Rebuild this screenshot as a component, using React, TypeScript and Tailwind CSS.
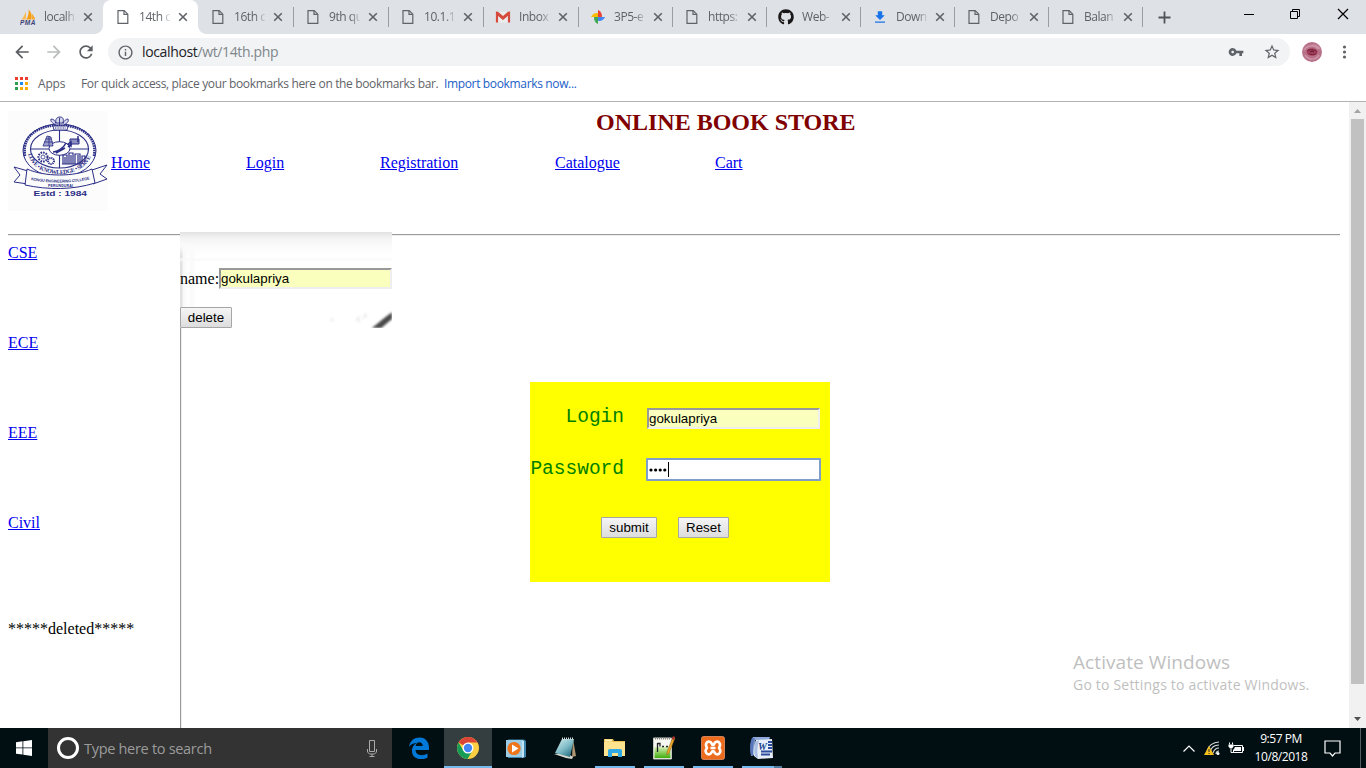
import React from "react";
import { FaGithub } from "react-icons/fa";
import { MdVpnKey, MdStarBorder, MdInfoOutline, MdArrowBack, MdArrowForward, MdRefresh } from "react-icons/md";

const FileIcon = () => (
  <svg width="12" height="16" viewBox="0 0 12 16" fill="none" stroke="#5f6368" strokeWidth="1.2">
    <path d="M1 1.6h6.2L10.8 5.2V14.4H1z" />
    <path d="M7 1.8V5.4h3.6" />
  </svg>
);

const PmaIcon = () => (
  <svg width="16" height="16" viewBox="0 0 16 16">
    <path d="M1.500 10.500C4 8 5 5 5.400 2.500c.8 2.500.8 5 .2 8z" fill="#fbb84c" />
    <path d="M6.200 10.500C8.500 7 9 4 8.600.5c3 3 3.600 6 2.700 10z" fill="#f89c0e" />
    <path d="M11.800 10.500c.5-2 .4-4-.2-6 1.800 1.500 3 3.500 3.600 6z" fill="#f8a52b" />
    <text x="0" y="15.600" fontSize="6.500" fontWeight="bold" fontStyle="italic" fontFamily="Liberation Sans, sans-serif" fill="#3c3f78" textLength="15.500">PMA</text>
  </svg>
);

const GmailIcon = () => (
  <svg width="16" height="16" viewBox="0 0 16 16">
    <path d="M2 3h12v10.500H2z" fill="#ececec" />
    <path d="M2 13.500V4.500l6 5 6-5v9" fill="none" stroke="#d54b3d" strokeWidth="2.200" />
    <path d="M1 2.700h2L8 7l5-4.300h2v2.500L8 10.400 1 5.200z" fill="#d54b3d" />
  </svg>
);

const PhotosIcon = () => (
  <svg width="16" height="16" viewBox="0 0 16 16">
    <path d="M8 1v7h3.800C12.500 5 10.500 1.700 8 1z" fill="#ea4335" />
    <path d="M15 8H8v3.800C11 12.500 14.200 10.500 15 8z" fill="#4285f4" />
    <path d="M8 15V8H4.200C3.500 11 5.500 14.200 8 15z" fill="#43a853" />
    <path d="M1 8h7V4.200C5 3.500 1.800 5.500 1 8z" fill="#fbbc05" />
  </svg>
);

const DownloadIcon = () => (
  <svg width="16" height="16" viewBox="0 0 16 16" fill="#1a73e8">
    <path d="M5.800 2.300h4.400v3.900h2.600L8 11 3.200 6.200h2.600zM3 12.500h10v1.300H3z" />
  </svg>
);

const CloseIcon = () => (
  <svg width="10" height="10" viewBox="0 0 10 10" stroke="#5f6368" strokeWidth="1.600">
    <path d="M1.200 1.200l7.600 7.600M8.800 1.200L1.200 8.800" />
  </svg>
);

type TabData = { title: string; icon: React.ReactNode; cls: string; active?: boolean; sep?: boolean };
const tabs: TabData[] = [
  { title: "localh", icon: <PmaIcon />, cls: "w-[95px]" },
  { title: "14th c", icon: <FileIcon />, cls: "w-[95px]", active: true },
  { title: "16th c", icon: <FileIcon />, cls: "w-[95px]", sep: true },
  { title: "9th qu", icon: <FileIcon />, cls: "w-[95px]", sep: true },
  { title: "10.1.1", icon: <FileIcon />, cls: "w-[95px]", sep: true },
  { title: "Inbox", icon: <GmailIcon />, cls: "w-[95px]", sep: true },
  { title: "3P5-e", icon: <PhotosIcon />, cls: "w-[94px]", sep: true },
  { title: "https:", icon: <FileIcon />, cls: "w-[94px]", sep: true },
  { title: "Web-", icon: <FaGithub size={16} color="#191717" />, cls: "w-[94px]", sep: true },
  { title: "Down", icon: <DownloadIcon />, cls: "w-[94px]", sep: true },
  { title: "Depo", icon: <FileIcon />, cls: "w-[94px]", sep: true },
  { title: "Balan", icon: <FileIcon />, cls: "w-[94px]", sep: true },
];

const Tab = ({ t }: { t: TabData }) => (
  <div className={`relative flex h-full shrink-0 items-center ${t.cls} ${t.active ? "rounded-t-lg bg-white" : ""}`}>
    {t.active && (
      <>
        <span className="absolute -left-2 bottom-0 size-2 bg-[radial-gradient(circle_at_0_0,#dee1e6_7.500px,#fff_8px)]" />
        <span className="absolute -right-2 bottom-0 size-2 bg-[radial-gradient(circle_at_100%_0,#dee1e6_7.500px,#fff_8px)]" />
      </>
    )}
    <span className="ml-3 flex w-4 justify-center">{t.icon}</span>
    <span className="ml-2 w-[31px] whitespace-nowrap text-[12px] leading-4 tracking-[-0.45px] text-[#5f6368] [mask-image:linear-gradient(to_right,#000_68%,transparent_105%)]">
      {t.title}
    </span>
    <span className="ml-2"><CloseIcon /></span>
    {t.sep && <span className="absolute -right-px top-[7px] h-5 w-px bg-[#9a9da1]" />}
  </div>
);

const TabStrip = () => (
  <div className="flex h-[34px] bg-[#dee1e6] pl-2">
    {tabs.map((t) => <Tab key={t.title} t={t} />)}
    <svg className="ml-4 mt-[11px]" width="13" height="13" viewBox="0 0 13 13" stroke="#505459" strokeWidth="1.800"><path d="M6.500.5v12M.5 6.500h12" /></svg>
    <div className="ml-auto flex items-start pr-[17px] pt-[8px]">
      <svg className="mr-[35px]" width="12" height="12" viewBox="0 0 12 12" stroke="#000"><path d="M1 6.500h10" /></svg>
      <svg className="mr-[36px]" width="11" height="12" viewBox="0 0 11 12" fill="none" stroke="#000"><path d="M.5 3.500h7v7h-7zM2.500 3.500v-2h7v7h-2" /></svg>
      <svg width="12" height="12" viewBox="0 0 12 12" stroke="#000" strokeWidth="1.200"><path d="M1 1l10 10M11 1L1 11" /></svg>
    </div>
  </div>
);

const Toolbar = () => (
  <div className="flex h-[36px] items-center bg-white">
    <MdArrowBack className="ml-[12px]" size={20} color="#5a5d61" />
    <MdArrowForward className="ml-[12px]" size={20} color="#babcbe" />
    <MdRefresh className="ml-[12px]" size={20} color="#5a5d61" />
    <div className="ml-[12px] flex h-7 w-[1182px] items-center rounded-full bg-[#f1f3f4] pl-[9px]">
      <MdInfoOutline size={17} color="#5f6368" />
      <span className="ml-2 text-[14px] leading-5 tracking-[-0.36px] text-[#80868b]"><span className="text-[#202124]">localhost</span>/wt/14th.php</span>
      <MdVpnKey className="ml-auto" size={16} color="#5f6368" />
      <MdStarBorder className="ml-[19px] mr-[9px]" size={18} color="#5f6368" />
    </div>
    <svg className="ml-3" width="20" height="20" viewBox="0 0 20 20">
      <circle cx="10" cy="10" r="10" fill="#b97189" />
      <path d="M2 8c4-6 12-6 16-1M3 13c4 6 11 5 14 0M4 6c4-3 9-3 12 1" stroke="#cc93a6" strokeWidth="1.500" fill="none" />
      <ellipse cx="10" cy="10" rx="5.500" ry="3.800" fill="#a5405c" />
      <path d="M5 9c2-2 7-2 10 1M7 11.500c2 1.500 5 1.500 7 0" stroke="#6f1d38" fill="none" />
      <path d="M8 10c1-1 3-1 4 0" stroke="#5b1730" fill="none" />
    </svg>
    <svg className="ml-[20px]" width="5" height="14" viewBox="0 0 5 14" fill="#5f6368"><circle cx="2.500" cy="2" r="1.600" /><circle cx="2.500" cy="7" r="1.600" /><circle cx="2.500" cy="12" r="1.600" /></svg>
  </div>
);

const Bookmarks = () => (
  <div className="flex h-[32px] items-center border-b border-[#b0b2b4] pb-[4px] text-[12px] leading-4 text-[#5f6368]">
    <svg className="ml-[15px]" width="13" height="13" viewBox="0 0 13 13">
      <path d="M0 0h3v3H0zM5 0h3v3H5zM10 0h3v3h-3z" fill="#f03c2e" />
      <path d="M0 5h3v3H0z" fill="#2d9d50" /><path d="M5 5h3v3H5z" fill="#1e88f5" /><path d="M10 5h3v3h-3z" fill="#f9ac08" />
      <path d="M0 10h3v3H0z" fill="#2d9d50" /><path d="M5 10h3v3H5zM10 10h3v3h-3z" fill="#f9ac08" />
    </svg>
    <span className="ml-[10px] w-[43px] pt-px tracking-[-0.2px]">Apps</span>
    <span className="w-[363px] whitespace-nowrap pt-px tracking-[-0.35px]">For quick access, place your bookmarks here on the bookmarks bar.</span>
    <span className="whitespace-nowrap pt-px tracking-[-0.35px] text-[#1a60c8]">Import bookmarks now...</span>
  </div>
);

const Crest = () => (
  <svg width="100" height="100" viewBox="0 0 100 100" fill="none" stroke="#2b2e86">
    <rect width="100" height="100" fill="#fcfcfc" stroke="none" />
    <ellipse cx="51.500" cy="39.500" rx="36.500" ry="26.500" strokeWidth="1" />
    <path d="M17 45C13 20 38 14 51.500 14S90 20 86 45" strokeWidth="2.600" strokeDasharray="1.600 .7" />
    <ellipse cx="51.500" cy="38" rx="29" ry="19" strokeWidth="1.100" />
    <path d="M51.500 19V57M22.500 38h58" strokeWidth="1.100" />
    <ellipse cx="51.500" cy="37.500" rx="10.500" ry="6.800" fill="#fcfcfc" />
    <path d="M45 41c4 0 10-3 13-9M48 42l9-5M60 36l8-7" strokeWidth="1.500" />
    <path d="M62 28h9v5h-9z" fill="#8d8fc1" /><path d="M60 33l3-2v4zM70 25v6" strokeWidth="1.500" />
    <path d="M35 35l4-10 4 1 2 9zM36 31h9M38 28h5M41 25v10" strokeWidth=".8" fill="#9ea0ca" />
    <circle cx="35" cy="46" r="4.500" strokeWidth="2" strokeDasharray="1.600 1" /><circle cx="35" cy="46" r="2" strokeWidth=".8" />
    <circle cx="43" cy="50" r="3" strokeWidth="2" strokeDasharray="1.200 .8" />
    <path d="M55 53v-9h4v9M61 53V42h4v11M67 53V43h5v10M57 46v7M63 44v9M70 44v9M74 53v-8h3v6M54 53h20" strokeWidth="1.200" />
    <defs><path id="motto" d="M20 43c6 27 57 27 64-1" /></defs>
    <text fontSize="6" fontWeight="bold" fill="#2b2e86" stroke="none" fontFamily="Liberation Serif, serif"><textPath href="#motto" textLength="78">LOVE • KNOWLEDGE • SERVE</textPath></text>
    <path d="M45 15h15l-1 4H46z" fill="#fcfcfc" strokeWidth=".9" /><path d="M47 17h11" strokeDasharray="1 .6" />
    <path d="M48 14c-4-2-6-4-5-6 3 0 4 2 5 4-1-4 1-6 4-6 3 0 4 2 3 6 1-2 3-4 5-4 1 3-1 4-4 6zM51.500 7v7M47 12h9" strokeWidth=".9" fill="#d6d7ea" />
    <path d="M20 60L6 56l6 8-6 7 14 2M84 59l15-5-7 9 7 5-14 5" fill="#fcfcfc" strokeWidth="1" />
    <path d="M19 58c18 8 47 8 65 0l3 14c-22 7-47 7-70 2z" fill="#fcfcfc" strokeWidth="1" />
    <defs><path id="college" d="M23 69c18 3.500 42 3.500 60-1" /></defs>
    <text fontSize="3.900" fontWeight="bold" fill="#2b2e86" stroke="none" fontFamily="Liberation Sans, sans-serif"><textPath href="#college" textLength="59">KONGU ENGINEERING COLLEGE</textPath></text>
    <text x="40" y="75.500" textLength="25" fontSize="3.600" fontWeight="bold" fill="#2b2e86" stroke="none" fontFamily="Liberation Sans, sans-serif">PERUNDURAI</text>
    <text x="25.500" y="84.800" textLength="53.500" lengthAdjust="spacingAndGlyphs" fontSize="8" fontWeight="bold" fill="#2b2e86" stroke="none" fontFamily="Liberation Sans, sans-serif">Estd : 1984</text>
  </svg>
);

const link = "text-[#0000ee] underline";
const field = "flex items-center border-2 border-[#eee] border-t-[#999] border-l-[#999] bg-[#faffbd] font-['Liberation_Sans',Arial,sans-serif] text-[13.333px] leading-[15px]";
const button = "flex h-[21px] items-center justify-center rounded-[1px] border border-[#a6a6a6] bg-linear-to-b from-[#f5f5f5] to-[#dddddd] font-['Liberation_Sans',Arial,sans-serif] text-[13.333px] leading-[15px]";
const label = "w-[94px] text-right font-['Liberation_Mono',monospace] text-[19.500px] leading-6 text-[#008000]";

const Header = () => (
  <header className="flex h-[132px]">
    <div className="ml-2 mt-[9px]"><Crest /></div>
    <div className="flex-1">
      <h1 className="pl-[488px] pt-[6px] text-[24px] font-bold leading-[28px] text-[#800000]">ONLINE BOOK STORE</h1>
      <nav className="mt-[18px] flex pl-[3px] text-[16px] leading-[18px]">
        <div className="w-[135px]"><a className={link}>Home</a></div>
        <div className="w-[134px]"><a className={link}>Login</a></div>
        <div className="w-[175px]"><a className={link}>Registration</a></div>
        <div className="w-[160px]"><a className={link}>Catalogue</a></div>
        <a className={link}>Cart</a>
      </nav>
    </div>
  </header>
);

const DeletePanel = () => (
  <div className="relative -mt-[4px] ml-[-1px] h-[96px] w-[212px] overflow-hidden bg-white">
    <div className="absolute inset-0 bg-[linear-gradient(to_bottom,#e2e2e2,#f3f3f3_6px,#fbfbfb_14px,transparent_24px,transparent_26px,#f9f9f9_27px,transparent_30px),linear-gradient(to_right,#e2e2e2_2px,#f7f7f7_3px,#fefefe_8px,#fafafa_12px,#fff_16px)]" />
    <svg className="absolute bottom-0 right-0 blur-[1px]" width="64" height="26" viewBox="0 0 64 26">
      <path d="M42 27c6-3 12-10 24-18v7c-5 3-10 8-14 11z" fill="#4a4a4a" />
      <path d="M1 18l4-3 1 5zM27 18l5-5v8zM37 10l3 4-6 4z" fill="#f0f0f0" />
    </svg>
    <div className="relative flex items-center pt-[36px] text-[16px] leading-[18px]">
      <span className="w-[39px]">name:</span>
      <div className={`${field} h-[21px] w-[173px]`}>gokulapriya</div>
    </div>
    <div className={`${button} relative mt-[18px] w-[52px]`}>delete</div>
  </div>
);

const LoginPanel = () => (
  <section className="ml-[349px] mt-[54px] h-[200px] w-[300px] bg-[#ffff00]">
    <div className="flex h-[75px] items-start pt-[26px]">
      <span className={`${label} -mt-[3px]`}>Login</span>
      <div className={`${field} ml-[23px] h-[21px] w-[173px]`}>gokulapriya</div>
    </div>
    <div className="-mt-[1px] flex h-[25px] items-center">
      <span className={label}>Password</span>
      <div className="ml-[22px] mt-[2px] flex h-[23px] w-[175px] items-center rounded-[1px] border-2 border-[#7f9fca] bg-white pl-px">
        <svg width="18" height="4" viewBox="0 0 18 4"><circle cx="2" cy="2" r="1.600" /><circle cx="6.600" cy="2" r="1.600" /><circle cx="11.200" cy="2" r="1.600" /><circle cx="15.800" cy="2" r="1.600" /></svg>
        <span className="ml-px h-[15px] w-px bg-black" />
      </div>
    </div>
    <div className="mt-[36px] flex gap-[21px] pl-[71px]">
      <div className={`${button} w-[56px]`}>submit</div>
      <div className={`${button} w-[51px]`}>Reset</div>
    </div>
  </section>
);

const Page = () => (
  <div className="flex h-[626px] bg-white font-['Liberation_Serif','Times_New_Roman',serif] text-black">
    <main className="relative w-[1349px]">
      <Header />
      <div className="mx-2 h-[2px] w-[1332px] border-b border-t border-b-[#eee] border-t-[#9a9a9a]" />
      <div className="flex h-[492px]">
        <aside className="w-[181px] text-[16px] leading-[18px]">
          <div className="flex h-full flex-col border-r border-[#999] pl-2 pt-[8px]">
            {["CSE", "ECE", "EEE", "Civil"].map((d) => <div key={d} className="h-[90px]"><a className={link}>{d}</a></div>)}
            <p className="mt-[16px]">*****deleted*****</p>
          </div>
        </aside>
        <div className="flex-1 shadow-[inset_1px_0_#eee]">
          <DeletePanel />
          <LoginPanel />
        </div>
      </div>
      <div className="absolute left-[1073px] top-[548px] whitespace-nowrap font-['Open_Sans','Noto_Sans',sans-serif] text-[#bfbfbf]">
        <p className="text-[19px] leading-[24px] tracking-[0.08px]">Activate Windows</p>
        <p className="pt-px text-[14px] leading-[20px] tracking-[0.2px]">Go to Settings to activate Windows.</p>
      </div>
    </main>
    <div className="flex w-[17px] flex-col items-center bg-[#f1f1f1]">
      <svg width="17" height="17" viewBox="0 0 17 17" fill="#a3a3a3"><path d="M5 11h7L8.500 7z" /></svg>
      <div className="h-[565px] w-[13px] bg-[#c1c1c1]" />
      <svg className="mt-auto" width="17" height="17" viewBox="0 0 17 17" fill="#505050"><path d="M5 6h7l-3.500 4z" /></svg>
    </div>
  </div>
);

const EdgeIcon = () => (
  <svg width="24" height="24" viewBox="0 0 24 24"><path d="M2 11C3 4.500 7.500 1.500 12.500 1.500c6.500 0 9.500 5 9.500 10V14H8.500c.3 6 7.500 6.200 12 3.500v4.200c-5 2.500-15.500 2.300-15.500-7 0-4.200 2.500-6.700 5-8C6.500 7 3.500 8.500 2 11zm6.600-1h7.200c0-5-6.700-5.200-7.200 0z" fill="#0078d7" /></svg>
);
const ChromeIcon = () => (
  <svg width="24" height="24" viewBox="0 0 24 24">
    <circle cx="12" cy="12" r="11" fill="#fccf42" />
    <path d="M12 12L2.500 6.500A11 11 0 0 1 21.500 6.500H12z" fill="#dc4437" />
    <path d="M2.500 6.500A11 11 0 0 0 11.500 23l5-8.500L12 17l-4.500-2.300z" fill="#179c58" />
    <circle cx="12" cy="12" r="5.500" fill="#fff" /><circle cx="12" cy="12" r="4.200" fill="#4285f4" />
  </svg>
);
const MediaIcon = () => (
  <svg width="24" height="24" viewBox="0 0 24 24">
    <path d="M3 3.500h16l2 1.500v16l-3 1H3z" fill="#3e83ab" /><path d="M1 4h16v17H1z" fill="#9ccbe4" /><path d="M17 4l2 1v16l-2 1z" fill="#c0e5f5" />
    <circle cx="9" cy="12.500" r="6.600" fill="#ee7519" /><path d="M7 8.500l6.500 4-6.500 4z" fill="#fff" />
  </svg>
);
const NotepadIcon = () => (
  <svg width="24" height="24" viewBox="0 0 24 24">
    <defs><linearGradient id="np" x1="0" y1="0" x2=".8" y2="1"><stop stopColor="#d9f0f2" /><stop offset=".55" stopColor="#7fbcc7" /><stop offset="1" stopColor="#246d80" /></linearGradient></defs>
    <path d="M19 3l3 17-4 1z" fill="#ad9571" /><path d="M0 18l12 4 6 1 1-2-6-4z" fill="#d7d7cd" /><path d="M8 3h12l-4 18L1 17z" fill="url(#np)" /><path d="M8 2.500h11" stroke="#d7dcdd" strokeWidth="2" strokeDasharray="1 1" />
  </svg>
);
const FolderIcon = () => (
  <svg width="24" height="24" viewBox="0 0 24 24">
    <path d="M1 3h9l1 2h11V20H1z" fill="#e8bd4c" /><path d="M2 3.500h7v2H2z" fill="#fff3b8" /><path d="M1 6h21v14H1z" fill="#fde38d" />
    <path d="M5 21v-7l1.500-1h11l1.500 1v7h-4v-4H9v4z" fill="#31a9e4" />
  </svg>
);
const NppIcon = () => (
  <svg width="24" height="24" viewBox="0 0 24 24">
    <defs><linearGradient id="npp" x1="0" y1="0" x2="0" y2="1"><stop stopColor="#d6efb5" /><stop offset="1" stopColor="#3fae0a" /></linearGradient></defs>
    <path d="M1.500 2h18v21h-18z" fill="#f6f7f0" stroke="#c5c9bd" /><path d="M2.500 11h16v11h-16z" fill="url(#npp)" />
    <path d="M3 2.500h16" stroke="#888" strokeWidth="2" strokeDasharray="1 1" /><path d="M5.500 7v9M5.500 7.500h2.500v3M10 10.500h2M14 10.500h2" stroke="#222" fill="none" strokeWidth="1.300" />
    <path d="M21 1l2 1-6 15-2 2v-3z" fill="#efac29" stroke="#9b5c16" strokeWidth=".6" /><path d="M21 0l2 1-1 3-2-1z" fill="#a42d31" />
  </svg>
);
const XamppIcon = () => (
  <svg width="24" height="24" viewBox="0 0 24 24">
    <rect x=".5" y=".5" width="23" height="23" rx="2" fill="#ed6b1c" stroke="#f4a070" strokeWidth=".7" />
    <path d="M9.500 6.200C6 4.500 3.500 8 6 11.800c-3 3.600-.5 7.500 3 6.200 2-.8 1.500-3 3-3s1 2.200 3 3c3.500 1.300 6-2.600 3-6.200 2.500-3.800 0-7.300-3.500-5.600-1.800 1-1 2.800-2.500 2.800s-.7-1.800-2.500-2.800zM9.500 12h5" fill="none" stroke="#fff" strokeWidth="2.600" strokeLinejoin="round" />
  </svg>
);
const WordIcon = () => (
  <svg width="24" height="24" viewBox="0 0 24 24">
    <path d="M3 1h17l-1 3H5L4 19l-3 1C0 12 0 6 3 1z" fill="#8faada" /><path d="M2 2h3C3 8 3 13 3 20l-2-1C0 12 0 6 2 2z" fill="#5877ba" />
    <path d="M6 4l16-1 1 19-15 1-4-3c-1-6 0-11 2-16z" fill="#e9eff9" /><path d="M5 6c-1 5-1 10 0 14l3 2c-1-5-1-11 1-18z" fill="#a9bee3" />
    <path d="M18 6h4M18 9h4M18 12h4M11 15.500h11M11 18.500h9" stroke="#2c4c9e" strokeWidth="1.800" />
    <text x="8" y="13.500" fontSize="10" fontWeight="bold" fontStyle="italic" fontFamily="Liberation Serif, serif" fill="#203f91">W</text>
  </svg>
);

const apps = [
  { n: "edge", icon: <EdgeIcon /> },
  { n: "chrome", icon: <ChromeIcon />, active: true },
  { n: "media", icon: <MediaIcon /> },
  { n: "notepad", icon: <NotepadIcon /> },
  { n: "folder", icon: <FolderIcon />, open: true },
  { n: "npp", icon: <NppIcon />, open: true },
  { n: "xampp", icon: <XamppIcon />, open: true },
  { n: "word", icon: <WordIcon />, open: true, multi: true },
];

const Taskbar = () => (
  <footer className="flex h-10 bg-[#010f13] text-white">
    <div className="flex w-12 items-center justify-center">
      <svg width="16" height="16" viewBox="0 0 16 16" fill="#fff"><path d="M0 2.200l6.500-.9v6.200H0zM7.300 1.200L16 0v7.500H7.300zM0 8.300h6.500v6.300L0 13.700zM7.300 8.300H16V16l-8.700-1.200z" /></svg>
    </div>
    <div className="flex w-[344px] items-center bg-[#333333] pl-[9px]">
      <span className="size-[22px] rounded-full border-[3px] border-white" />
      <span className="ml-[5px] pt-px text-[14.500px] leading-5 tracking-[-0.3px] text-[#9b9b9b]">Type here to search</span>
      <svg className="ml-auto mr-[14px]" width="13" height="17" viewBox="0 0 13 17" fill="none" stroke="#aaa"><path d="M4.500.5h5v11h-5zM2.500 9v3l2 2h5l2-2V9M7 14v2.500M4.500 16.500h5" /></svg>
    </div>
    <div className="ml-[3px] flex gap-px">
      {apps.map((a) => (
        <div key={a.n} className={`relative flex w-12 items-center justify-center ${a.active ? "bg-[#343e41]" : ""}`}>
          {a.icon}
          {a.active && <span className="absolute bottom-0 left-0 h-[2px] w-12 bg-[#76b9ed]" />}
          {a.open && <span className="absolute bottom-0 left-1 h-[2px] w-10 bg-[#76b9ed]" />}
          {a.multi && <span className="absolute bottom-0 right-1 h-[2px] w-2 bg-[#4d7c9f]" />}
        </div>
      ))}
    </div>
    <div className="ml-auto flex items-center">
      <svg width="12" height="7" viewBox="0 0 12 7" fill="none" stroke="#fff" strokeWidth="1.200"><path d="M.5 6.500L6 1l5.500 5.500" /></svg>
      <svg className="ml-[9px]" width="17" height="16" viewBox="0 0 17 16" fill="none">
        <path d="M3 11C4 6 9 2 15 2M6 12c1-4 4-7 9-7M9 13c1-3 3-5 6-5M12 14c0-2 1-3 3-3" stroke="#dadada" strokeWidth="1.100" />
        <circle cx="14" cy="13.500" r="1.500" fill="#fff" /><path d="M5 6l5 9H0z" fill="#f9c11d" /><path d="M5 9v3M5 13v1" stroke="#222" />
      </svg>
      <svg className="ml-[7px]" width="17" height="13" viewBox="0 0 17 13" fill="none" stroke="#fff"><path d="M5.500 3.500h9v7h-9v-3M15.500 5v4M1.500.5v2M4.500.5v2M3 7v3.500h2.500" /><path d="M7 5h6v4H6V7z" fill="#fff" stroke="none" /><path d="M.5 2.500h5v2L4 6.500H2l-1.500-2z" fill="#fff" stroke="none" /></svg>
      <div className="ml-[8px] w-[56px] whitespace-nowrap text-center text-[12px] leading-[18px] tracking-[-0.45px]"><p>9:57 PM</p><p>10/8/2018</p></div>
      <svg className="ml-[15px]" width="17" height="17" viewBox="0 0 17 17" fill="none" stroke="#fff" strokeWidth="1.200"><path d="M1 1h15v12h-5l-2.500 3L6 13H1z" /></svg>
      <span className="ml-[19px] mr-[5px] h-10 w-px bg-[#535d60]" />
    </div>
  </footer>
);

export default function App() {
  return (
    <div className="h-[768px] w-[1366px] overflow-hidden bg-white font-['Open_Sans','Noto_Sans',sans-serif]">
      <TabStrip />
      <Toolbar />
      <Bookmarks />
      <Page />
      <Taskbar />
    </div>
  );
}
